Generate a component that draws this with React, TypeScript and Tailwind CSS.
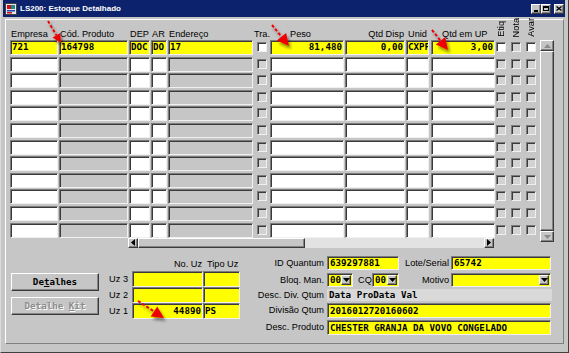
import React from "react";

const SANS = "font-['Liberation_Sans',Arial,sans-serif]";
const MONO = "font-['DejaVu_Sans_Mono',monospace] font-bold text-[9.2px] leading-[12px] text-black whitespace-nowrap";
const SUNK =
  "border border-t-[#7b7b7b] border-l-[#7b7b7b] border-b-[#f0f0f0] border-r-[#f0f0f0] shadow-[inset_1px_1px_0_#3a3a3a]";
const RAISED =
  "border border-t-white border-l-white border-b-[#3a3a3a] border-r-[#3a3a3a] shadow-[inset_-1px_-1px_0_#848484]";
const BG = "bg-[#c6c6c6]";
const YEL = "bg-[#ffff00]";

function Box({ on }: { on: boolean }) {
  return <div className={`w-[10px] h-[10px] ${SUNK} ${on ? "bg-white" : "bg-[#d2d2d2]"}`} />;
}

function Tri({ dir, color }: { dir: "up" | "down" | "left" | "right"; color: string }) {
  const pts =
    dir === "up"
      ? "0,4 3.5,0 7,4"
      : dir === "down"
      ? "0,0 7,0 3.5,4"
      : dir === "left"
      ? "4,0 4,7 0,3.5"
      : "0,0 0,7 4,3.5";
  const w = dir === "up" || dir === "down" ? 7 : 4;
  const h = dir === "up" || dir === "down" ? 4 : 7;
  return (
    <svg width={w} height={h} viewBox={`0 0 ${w} ${h}`}>
      <polygon points={pts} fill={color} />
    </svg>
  );
}

function DataRow({ first }: { first?: boolean }) {
  const ed = first ? YEL : "bg-white";
  const ro = first ? YEL : BG;
  const on = !!first;
  return (
    <div className="flex h-[16.6px] shrink-0">
      <div className={`w-[48px] h-[15px] ${SUNK} ${ed} ${MONO} pl-[1px]`}>{first ? "721" : ""}</div>
      <div className={`ml-[1px] w-[69px] h-[15px] ${SUNK} ${ro} ${MONO} pl-[1px]`}>{first ? "164798" : ""}</div>
      <div className={`ml-[1px] w-[21px] h-[15px] ${SUNK} ${ed} ${MONO} pl-[1px] overflow-hidden`}>{first ? "DOC" : ""}</div>
      <div className={`ml-[1px] w-[16px] h-[15px] ${SUNK} ${ed} ${MONO} pl-[1px] overflow-hidden`}>{first ? "DO" : ""}</div>
      <div className={`ml-[1px] w-[85px] h-[15px] ${SUNK} ${ro} ${MONO} pl-[1px]`}>{first ? "17" : ""}</div>
      <div className="ml-[4px] mt-[2px]">
        <Box on={on} />
      </div>
      <div className={`ml-[3px] w-[74px] h-[15px] ${SUNK} ${ed} ${MONO} text-right pr-[1px]`}>{first ? "81,480" : ""}</div>
      <div className={`ml-[1px] w-[60px] h-[15px] ${SUNK} ${ed} ${MONO} text-right pr-[1px]`}>{first ? "0,00" : ""}</div>
      <div className={`ml-[1px] w-[23px] h-[15px] ${SUNK} ${ed} ${MONO} pl-[1px] overflow-hidden`}>{first ? "CXPF" : ""}</div>
      <div className={`ml-[2px] w-[64px] h-[15px] ${SUNK} ${ed} ${MONO} text-right pr-[1px]`}>{first ? "3,00" : ""}</div>
      <div className="ml-[1px] mt-[2px]">
        <Box on={on} />
      </div>
      <div className="ml-[5px] mt-[2px]">
        <Box on={false} />
      </div>
      <div className="ml-[5px] mt-[2px]">
        <Box on={on} />
      </div>
    </div>
  );
}

function Combo({ w, val }: { w: string; val: string }) {
  return (
    <div className={`${SUNK} ${YEL} h-[14px] flex items-center ${w}`}>
      <span className={`${MONO} pl-[2px] flex-1 overflow-hidden`}>{val}</span>
      <div className={`w-[10px] h-[10px] mr-[1px] ${RAISED} ${BG} flex items-center justify-center`}>
        <Tri dir="down" color="#000" />
      </div>
    </div>
  );
}

function Arrow({ x1, y1, bx, by, tip, c1, c2 }: { x1: number; y1: number; bx: number; by: number; tip: string; c1: string; c2: string }) {
  return (
    <g filter="url(#sh)">
      <line x1={x1} y1={y1} x2={bx} y2={by} stroke="#ee0000" strokeWidth="2" strokeDasharray="3 2" />
      <polygon points={`${tip} ${c1} ${c2}`} fill="#ee0000" />
    </g>
  );
}

export default function App() {
  const rows = Array.from({ length: 12 }, (_, i) => i);
  return (
    <div className={`relative w-[569px] h-[353px] overflow-hidden ${BG} ${SANS} text-black border-l border-l-[#dcdcdc] border-r border-r-[#404040] border-b border-b-[#404040]`}>
      {/* title bar */}
      <div className="ml-[2px] mr-[3px] h-[17px] bg-[#0c226c] flex items-center">
        <svg width="12" height="12" viewBox="0 0 12 12" className="ml-[2px]">
          <rect x="0.5" y="0.5" width="11" height="11" fill="#e8e8e8" stroke="#404040" />
          <rect x="2" y="2" width="4" height="4" fill="#d01010" />
          <rect x="6" y="2" width="4" height="4" fill="#1a8a8a" />
          <rect x="2" y="7" width="8" height="1.5" fill="#2040c0" />
          <rect x="2" y="9" width="5" height="1.5" fill="#d01010" />
        </svg>
        <span className="ml-[3px] text-white font-bold text-[8px] leading-[10px]">LS200: Estoque Detalhado</span>
        <div className="ml-auto flex items-center mr-[1px]">
          <div className={`w-[10px] h-[10px] ${RAISED} ${BG} flex items-end justify-center pb-[1px]`}>
            <div className="w-[4px] h-[1.5px] bg-black" />
          </div>
          <div className={`w-[10px] h-[10px] ${RAISED} ${BG} flex items-center justify-center`}>
            <div className="w-[6px] h-[5px] border border-black border-t-2" />
          </div>
          <div className={`ml-[3px] w-[10px] h-[10px] ${RAISED} ${BG} flex items-center justify-center`}>
            <svg width="6" height="5" viewBox="0 0 6 5">
              <path d="M0.5 0.5 L5.5 4.5 M5.5 0.5 L0.5 4.5" stroke="#000" strokeWidth="1.3" />
            </svg>
          </div>
        </div>
      </div>

      {/* main panel */}
      <div className="ml-[4px] mr-[4px] mt-[2px] h-[325px] border border-t-white border-l-white border-b-[#808080] border-r-[#808080] flex flex-col">
        {/* header */}
        <div className="flex h-[20px] items-end text-[9.2px] leading-[12px] pl-[4px] whitespace-nowrap">
          <div className="w-[48px] pl-[1px]">Empresa</div>
          <div className="ml-[1px] w-[69px] pl-[1px]">Cód. Produto</div>
          <div className="ml-[1px] w-[21px] pl-[1px]">DEP</div>
          <div className="ml-[1px] w-[16px] pl-[1px]">AR</div>
          <div className="ml-[1px] w-[85px] pl-[1px]">Endereço</div>
          <div className="w-[17px] pl-[1px]">Tra.</div>
          <div className="w-[74px] pl-[20px]">Peso</div>
          <div className="ml-[1px] w-[60px] text-right pr-[1px]">Qtd Disp</div>
          <div className="ml-[1px] w-[23px] pl-[2px]">Unid</div>
          <div className="ml-[2px] w-[64px] pl-[11px]">Qtd em UP</div>
          <div className="ml-[1px] w-[10px] mb-[3px] flex justify-center">
            <span className="[writing-mode:vertical-rl] rotate-180 leading-[10px]">Etiq</span>
          </div>
          <div className="ml-[5px] w-[10px] mb-[3px] flex justify-center">
            <span className="[writing-mode:vertical-rl] rotate-180 leading-[10px]">Nota</span>
          </div>
          <div className="ml-[5px] w-[10px] mb-[3px] flex justify-center">
            <span className="[writing-mode:vertical-rl] rotate-180 leading-[10px]">Avar</span>
          </div>
        </div>

        {/* grid + scrollbars */}
        <div className="flex pl-[4px]">
          <div className="flex flex-col w-[526px]">
            <div className="flex flex-col h-[197.6px]">
              {rows.map((i) => (
                <DataRow key={i} first={i === 0} />
              ))}
            </div>
            <div className="ml-[118px] w-[366px] h-[10px] flex">
              <div className={`w-[10px] h-[10px] ${RAISED} ${BG} flex items-center justify-center`}>
                <Tri dir="left" color="#000" />
              </div>
              <div className={`w-[167px] h-[10px] ${RAISED} ${BG}`} />
              <div className="flex-1 h-[10px] bg-[#e2e2e2]" />
              <div className={`w-[10px] h-[10px] ${RAISED} ${BG} flex items-center justify-center`}>
                <Tri dir="right" color="#000" />
              </div>
            </div>
          </div>
          <div className="ml-[4px] w-[14px] h-[202px] flex flex-col">
            <div className={`h-[11px] ${RAISED} ${BG} flex items-center justify-center`}>
              <Tri dir="up" color="#8a8a8a" />
            </div>
            <div className={`flex-1 ${RAISED} ${BG}`} />
            <div className={`h-[11px] ${RAISED} ${BG} flex items-center justify-center`}>
              <Tri dir="down" color="#8a8a8a" />
            </div>
          </div>
        </div>

        {/* bottom section */}
        <div className="flex items-start text-[9.2px]">
          {/* buttons */}
          <div className="ml-[5px] w-[88px] pt-[25px] flex flex-col">
            <div className={`h-[18px] ${RAISED} ${BG} flex items-center justify-center ${MONO}`}>
              <span>
                De<span className="underline">t</span>alhes
              </span>
            </div>
            <div className={`mt-[6px] h-[18px] ${RAISED} ${BG} flex items-center justify-center ${MONO}`}>
              <span className="text-[#8c8c8c] [text-shadow:1px_1px_0_#ffffff]">
                Detalhe <span className="underline">K</span>it
              </span>
            </div>
          </div>

          {/* Uz block */}
          <div className="pt-[10px] flex flex-col">
            <div className="flex h-[13px] leading-[12px]">
              <div className="w-[29px]" />
              <div className="ml-[4px] w-[71px] text-right pr-[1px]">No. Uz</div>
              <div className="w-[37px] pl-[4px] whitespace-nowrap">Tipo Uz</div>
            </div>
            {[
              ["Uz 3", "", ""],
              ["Uz 2", "", ""],
              ["Uz 1", "44890", "PS"],
            ].map(([l, n, t]) => (
              <div key={l} className="flex h-[16px] items-center">
                <div className="w-[29px] text-right leading-[12px]">{l}</div>
                <div className={`ml-[4px] w-[71px] h-[16px] ${SUNK} ${YEL} ${MONO} leading-[14px] text-right pr-[1px]`}>{n}</div>
                <div className={`w-[37px] h-[16px] ${SUNK} ${YEL} ${MONO} leading-[14px] pl-[1px]`}>{t}</div>
              </div>
            ))}
          </div>

          {/* form */}
          <div className="pt-[8px] flex flex-col leading-[12px]">
            <div className="flex h-[14px] items-center">
              <div className="w-[84px] text-right">ID Quantum</div>
              <div className={`ml-[3px] w-[72px] h-[14px] ${SUNK} ${YEL} ${MONO} pl-[2px]`}>639297881</div>
              <div className="w-[50px] text-right whitespace-nowrap">Lote/Serial</div>
              <div className={`ml-[2px] w-[100px] h-[14px] ${SUNK} ${YEL} ${MONO} pl-[2px]`}>65742</div>
            </div>
            <div className="mt-[3px] flex h-[14px] items-center">
              <div className="w-[84px] text-right">Bloq. Man.</div>
              <div className="ml-[3px]">
                <Combo w="w-[26px]" val="00" />
              </div>
              <div className="ml-[5px] w-[14px]">CQ</div>
              <Combo w="w-[27px]" val="00" />
              <div className="w-[50px] text-right">Motivo</div>
              <div className="ml-[2px]">
                <Combo w="w-[100px]" val="" />
              </div>
            </div>
            <div className="mt-[2px] flex h-[12px] items-center">
              <div className="w-[84px] text-right whitespace-nowrap">Desc. Div. Qtum</div>
              <div className={`ml-[3px] w-[225px] h-[12px] bg-[#d9d9d9] ${MONO} pl-[2px] leading-[12px]`}>Data ProData Val</div>
            </div>
            <div className="mt-[2px] flex h-[15px] items-center">
              <div className="w-[84px] text-right">Divisão Qtum</div>
              <div className={`ml-[3px] w-[224px] h-[15px] ${SUNK} ${YEL} ${MONO} pl-[2px] leading-[13px]`}>2016012720160602</div>
            </div>
            <div className="mt-[2px] flex h-[15px] items-center">
              <div className="w-[84px] text-right">Desc. Produto</div>
              <div className={`ml-[3px] w-[224px] h-[15px] ${SUNK} ${YEL} ${MONO} pl-[2px] leading-[13px]`}>
                CHESTER GRANJA DA VOVO CONGELADO
              </div>
            </div>
          </div>
        </div>
      </div>

      {/* red annotation arrows */}
      <svg className="absolute left-0 top-0 pointer-events-none" width="569" height="353">
        <defs>
          <filter id="sh" x="-50%" y="-50%" width="200%" height="200%">
            <feDropShadow dx="2" dy="3" stdDeviation="1.5" floodColor="#000" floodOpacity="0.45" />
          </filter>
        </defs>
        <Arrow x1={47} y1={21} bx={55.4} by={35.3} tip="60,43" c1="51.5,37.5" c2="59.3,33" />
        <Arrow x1={271} y1={25} bx={280.5} by={36.7} tip="288,46" c1="275.8,40.4" c2="285.1,32.9" />
        <Arrow x1={431} y1={30} bx={439.5} by={40.6} tip="447,50" c1="434.8,44.4" c2="444.2,36.9" />
        <Arrow x1={137} y1={301} bx={153} by={311.4} tip="163,318" c1="149.7,316.4" c2="156.2,306.4" />
      </svg>
    </div>
  );
}
